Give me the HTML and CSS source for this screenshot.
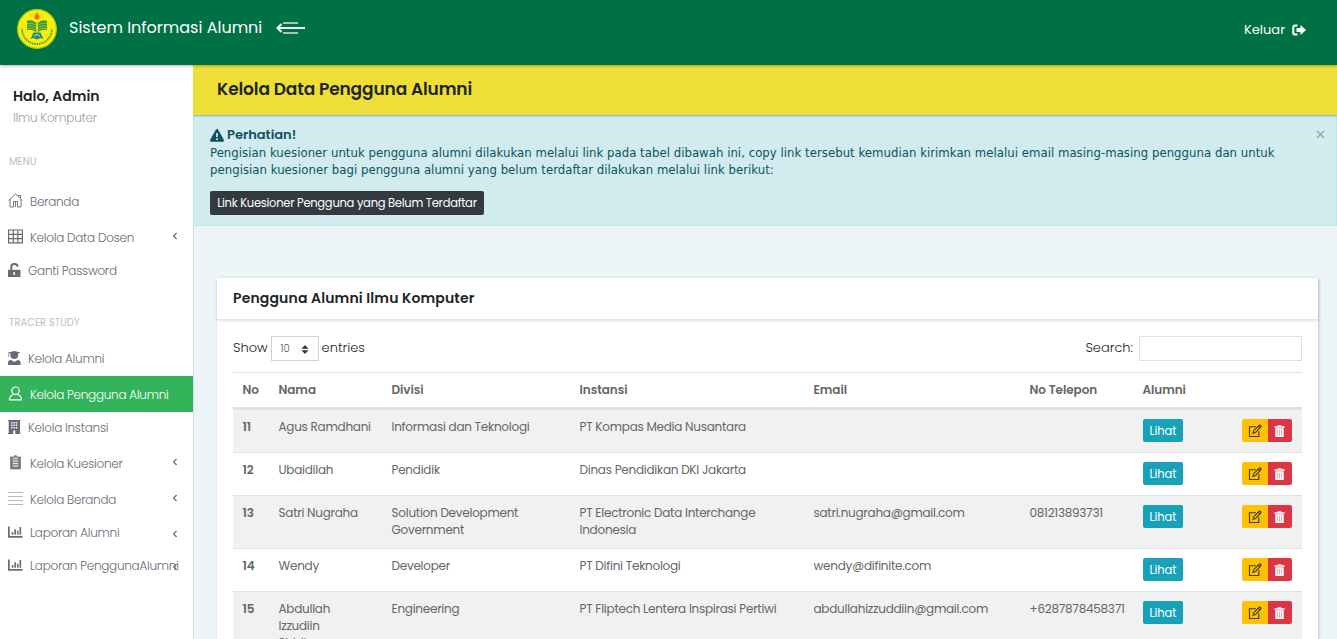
FILE: index.html
```html
<!DOCTYPE html>
<html lang="id">
<head>
<meta charset="utf-8">
<title>Sistem Informasi Alumni</title>
<link rel="stylesheet" href="styles.css">
</head>
<body>
<svg class="sprite" aria-hidden="true">
  <symbol id="caret" viewBox="0 0 6 8"><path d="M4.600 1L1.600 4l3 3" fill="none" stroke="currentColor" stroke-width="1.200"/></symbol>
  <symbol id="chart" viewBox="0 0 16 14"><path d="M0 .5h1.800v10.200h13.700v2H0zM4 6.500h1.700v3H4zM6.800 3.500h1.800v6H6.800zM9.700 5h1.600v4.500H9.700zM12.300 1H14v8.500h-1.700z" fill="currentColor"/></symbol>
  <symbol id="edit" viewBox="0 0 14 14"><path d="M8 2.700H1.500v9.800h9.300V7.200M5 9.300l.7-2.600 5.500-5.400q.7-.5 1.400.2t.2 1.400L7.500 8.500zM10.200 2.200l1.700 1.700" fill="none" stroke="currentColor" stroke-width="1.150"/></symbol>
  <symbol id="trash" viewBox="0 0 12 13"><path d="M.5 1.300H3.700V.3h3.600v1H10.500v1.500H.5z" fill="currentColor"/><path d="M1.300 3.300h8.400V12H1.300z" fill="currentColor"/><path d="M3.500 4.700v5.800M5.500 4.700v5.800M7.500 4.700v5.800" stroke="#e88a94" stroke-width=".8"/></symbol>
</svg>
<header class="topbar">
  <svg class="logo" viewBox="0 0 40 40">
    <circle cx="20" cy="20" r="19.300" fill="#f8ee0b" stroke="#b6ce1c" stroke-width="1.200"/>
    <path d="M5 20a15 15 0 0 0 30 0" fill="none" stroke="#4f9a2b" stroke-width="1.800" stroke-dasharray="1.500 .8"/>
    <path d="M20 3q4 5 2 7.500h-4q-2-2.500 2-7.500z" fill="#ee7f1c"/><path d="M20 6v3.500" stroke="#cf3d1c" stroke-width="1"/>
    <path d="M19 14q-4-4-9-2v9q5-1 9 2zM21 14q4-4 9-2v9q-5-1-9 2z" fill="#38983a"/>
    <path d="M10 14.500q5-1.500 9 1.500M10 17q5-1.500 9 1.500M10 19.500q5-1.500 9 1.500M30 14.500q-5-1.500-9 1.500M30 17q-5-1.500-9 1.500M30 19.500q-5-1.500-9 1.500" fill="none" stroke="#d2df21" stroke-width=".6"/>
    <path d="M16.500 23.500h7l3 6.500-3-1-3.500 1.500-3.500-1.500-3 1z" fill="#25906b"/><path d="M17 27q3-3 6 0" fill="none" stroke="#c4ded0"/>
    <path d="M20 12v11" stroke="#a9cb24"/>
  </svg>
  <span class="brand">Sistem Informasi Alumni</span>
  <svg class="toggle" viewBox="0 0 30 14"><path d="M7 2h15M7 12h15" stroke="#d5e8df" stroke-width="1.500"/><path d="M2 7h27" stroke="#fff" stroke-width="2"/><path d="M5.500 3L1.500 7l4 4" fill="none" stroke="#fff" stroke-width="2"/></svg>
  <a class="logout">Keluar <svg viewBox="0 0 14 12"><path d="M5.500 1.500H3Q1.300 1.500 1.300 3v6q0 1.500 1.700 1.500h2.500" fill="none" stroke="#fff" stroke-width="2"/><path d="M4.500 4h4V1L14 6l-5.500 5V8h-4z" fill="#fff"/></svg></a>
</header>
<div class="shell">
  <nav class="sidebar">
    <div class="hello">Halo, Admin</div>
    <div class="dept">Ilmu Komputer</div>
    <div class="section first">MENU</div>
    <a class="item tall"><svg class="ic" viewBox="0 0 15 15"><path d="M.5 7.500l7-6.500 7 6.500M2 6.300V14h3.500V8.500h4V14H13V6.300M10 2.500h2.500V5M7.500 9v5" fill="none" stroke="currentColor" stroke-width=".9"/></svg><span>Beranda</span></a>
    <a class="item tall"><svg class="ic" viewBox="0 0 15 15"><path d="M.6 1h13.800v12.800H.6zM5.300 1v12.800M9.900 1v12.800M.6 5.300h13.800M.6 9.600h13.800" fill="none" stroke="currentColor" stroke-width="1.200"/></svg><span>Kelola Data Dosen</span><svg class="caret"><use href="#caret"/></svg></a>
    <a class="item fa"><svg class="ic" viewBox="0 0 15 15"><path d="M3.300 7V4.200a3 3 0 0 1 6.200-.4" fill="none" stroke="currentColor" stroke-width="2"/><path d="M0 6.800h12.500V14H0z" fill="currentColor"/><path d="M6.200 9v3" stroke="#fff" stroke-width="1.500"/></svg><span>Ganti Password</span></a>
    <div class="section second">TRACER STUDY</div>
    <a class="item fa"><svg class="ic" viewBox="0 0 15 15"><path d="M0 1.500L6.300 0l6.300 1.500-2.500.9V5q-.5 3-3.800 3T2.500 5V2.400L1.200 2v4H.5V2zM0 14v-2q0-3 3-3l3.300 2 3.300-2q3 0 3 3v2z" fill="currentColor"/></svg><span>Kelola Alumni</span></a>
    <a class="item tall active"><svg class="ic" viewBox="0 0 15 15"><circle cx="7.500" cy="4.700" r="3.700" fill="none" stroke="currentColor" stroke-width="1.200"/><path d="M5.300 8.500Q1.500 10 1.500 13.800h12Q13.500 10 9.700 8.500" fill="none" stroke="currentColor" stroke-width="1.200"/></svg><span>Kelola Pengguna Alumni</span></a>
    <a class="item fa"><svg class="ic" viewBox="0 0 15 15"><path d="M0 0h12.500v1H12v12h.5v1H0v-1h.7V1H0z" fill="currentColor"/><path d="M3.200 2.800h6M3.200 5.300h6M3.200 7.800h6" stroke="#fff" stroke-width="1.400" stroke-dasharray="1.400 .9"/><path d="M5.300 10.500h2V14h-2z" fill="#fff"/></svg><span>Kelola Instansi</span></a>
    <a class="item tall"><svg class="ic" viewBox="0 0 15 15"><path d="M2.500 1.500h3Q6 0 7.500 0t2 1.500h3V14h-10z" fill="#8b8c96"/><path d="M3 2v11.500h9V2" fill="none" stroke="currentColor" stroke-width="1.300"/><path d="M5.300 3.500h4.500M5 6h5M5 8.500h5M5 11h5" stroke="#fff" stroke-width=".8"/></svg><span>Kelola Kuesioner</span><svg class="caret"><use href="#caret"/></svg></a>
    <a class="item tall"><svg class="ic" viewBox="0 0 15 15"><path d="M0 1.500h15M0 5.500h15M0 9.500h15M0 13.500h15" stroke="#babbc1" stroke-width="1"/></svg><span>Kelola Beranda</span><svg class="caret"><use href="#caret"/></svg></a>
    <a class="item"><svg class="ic"><use href="#chart"/></svg><span>Laporan Alumni</span><svg class="caret"><use href="#caret"/></svg></a>
    <a class="item"><svg class="ic"><use href="#chart"/></svg><span>Laporan PenggunaAlumni</span><svg class="caret"><use href="#caret"/></svg></a>
  </nav>
  <main class="content">
    <h1 class="title">Kelola Data Pengguna Alumni</h1>
    <section class="alert">
      <div class="alert-head"><svg viewBox="0 0 14 13"><path d="M7 0q.8 0 1.200.8l5.600 10q.5 2-1 2H1.200q-1.500 0-1-2l5.600-10Q6.200 0 7 0z" fill="currentColor"/><path d="M7 4v4M7 9.300v1.700" stroke="#d1ebef" stroke-width="1.700"/></svg><b>Perhatian!</b>
      <svg class="close" viewBox="0 0 9 9"><path d="M1 1l7 7M8 1L1 8" stroke="currentColor" stroke-width="1.100"/></svg></div>
      <p class="notice">Pengisian kuesioner untuk pengguna alumni dilakukan melalui link pada tabel dibawah ini, copy link tersebut kemudian kirimkan melalui email masing-masing pengguna dan untuk<br>pengisian kuesioner bagi pengguna alumni yang belum terdaftar dilakukan melalui link berikut:</p>
      <a class="dark-btn">Link Kuesioner Pengguna yang Belum Terdaftar</a>
    </section>
    <section class="card">
      <h2 class="card-title">Pengguna Alumni Ilmu Komputer</h2>
      <div class="card-body">
        <div class="controls">
          <span class="lbl">Show</span>
          <span class="select">10<svg viewBox="0 0 8 9"><path d="M4 0l3.600 3.800H.4zM4 9l3.600-3.800H.4z" fill="#343a40"/></svg></span>
          <span class="lbl">entries</span>
          <label class="search"><span class="lbl">Search:</span><input type="text"></label>
        </div>
        <table class="grid">
          <colgroup><col class="c1"><col class="c2"><col class="c3"><col class="c4"><col class="c5"><col class="c6"><col class="c7"><col class="c8"></colgroup>
          <thead><tr><th>No</th><th>Nama</th><th>Divisi</th><th>Instansi</th><th>Email</th><th>No Telepon</th><th>Alumni</th><th></th></tr></thead>
          <tbody>
            <tr><th>11</th><td>Agus Ramdhani</td><td>Informasi dan Teknologi</td><td>PT Kompas Media Nusantara</td><td></td><td></td><td><a class="see">Lihat</a></td><td><span class="acts"><a class="ed"><svg><use href="#edit"/></svg></a><a class="del"><svg><use href="#trash"/></svg></a></span></td></tr>
            <tr><th>12</th><td>Ubaidilah</td><td>Pendidik</td><td>Dinas Pendidikan DKI Jakarta</td><td></td><td></td><td><a class="see">Lihat</a></td><td><span class="acts"><a class="ed"><svg><use href="#edit"/></svg></a><a class="del"><svg><use href="#trash"/></svg></a></span></td></tr>
            <tr><th>13</th><td>Satri Nugraha</td><td>Solution Development<br>Government</td><td>PT Electronic Data Interchange<br>Indonesia</td><td>satri.nugraha@gmail.com</td><td>081213893731</td><td><a class="see">Lihat</a></td><td><span class="acts"><a class="ed"><svg><use href="#edit"/></svg></a><a class="del"><svg><use href="#trash"/></svg></a></span></td></tr>
            <tr><th>14</th><td>Wendy</td><td>Developer</td><td>PT Difini Teknologi</td><td>wendy@difinite.com</td><td></td><td><a class="see">Lihat</a></td><td><span class="acts"><a class="ed"><svg><use href="#edit"/></svg></a><a class="del"><svg><use href="#trash"/></svg></a></span></td></tr>
            <tr><th>15</th><td>Abdullah<br>Izzudiin<br>Shidiq</td><td>Engineering</td><td>PT Fliptech Lentera Inspirasi Pertiwi</td><td>abdullahizzuddiin@gmail.com</td><td>+6287878458371</td><td><a class="see">Lihat</a></td><td><span class="acts"><a class="ed"><svg><use href="#edit"/></svg></a><a class="del"><svg><use href="#trash"/></svg></a></span></td></tr>
          </tbody>
        </table>
      </div>
    </section>
  </main>
</div>
</body>
</html>
```
FILE: styles.css
```css
* { box-sizing: border-box; }
html, body { margin: 0; height: 639px; overflow: hidden; }
body { font: 300 13px/20px Poppins, Inter, sans-serif; color: #212529; background: #ecf4f7; white-space: nowrap; }
.sprite { display: none; }
h1, h2, p { margin: 0; }

.topbar { height: 65px; background: #007046; color: #fff; display: flex; align-items: flex-start; padding: 9px 31px 0 17px; position: relative; box-shadow: 0 1px 3px rgba(0,0,0,.3); z-index: 1; }
.logo { width: 40px; height: 40px; }
.brand { font-size: 16px; font-weight: 400; line-height: 24px; margin: 7px 0 0 12px; width: 192px; }
.toggle { width: 30px; height: 14px; margin: 12px 0 0 15px; }
.logout { margin: 11px 0 0 auto; font-weight: 400; display: flex; align-items: center; gap: 7px; }
.logout svg { width: 14px; height: 12px; margin-top: -1px; }

.shell { display: flex; height: 574px; }
.sidebar { width: 193px; flex: none; background: #fff; box-shadow: 1px 0 0 #d5e0e4; }
.hello { font-size: 14px; font-weight: 600; padding: 21px 0 0 13px; }
.dept { font-size: 12px; letter-spacing: -.26px; color: #a0a0a0; margin: 2px 0 0 13px; }
.section { font-size: 10px; font-weight: 400; color: #c0c0c0; padding-left: 9px; line-height: 20px; }
.first { margin: 24px 0 11px; }
.second { margin: 25px 0 10px; }
.item { display: flex; align-items: center; height: 33px; padding: 0 13px 2px 8px; color: #686a76; font-size: 12px; letter-spacing: -.26px; position: relative; }
.item.tall { height: 36px; padding: 1px 13px 0 8px; }
.ic { width: 15px; height: 15px; margin-right: 7px; flex: none; }
.tall .ic { margin-top: -2px; }
.fa .ic { margin-right: 5px; }
.caret { width: 6px; height: 8px; position: absolute; right: 15px; top: 13px; }
.active { background: #34b45a; color: #fff; }

.content { flex: 1; min-width: 0; overflow: hidden; }
.title { height: 50px; background: #eddf37; padding: 12px 24px; font-size: 17px; line-height: 24px; font-weight: 600; letter-spacing: -.13px; box-shadow: 0 1px 2px rgba(0,0,0,.25); position: relative; }
.alert { height: 111px; background: #d1ebef; color: #0c5460; border: 1px solid #bee5eb; padding: 10px 11px 0 16px; }
.alert-head { display: flex; align-items: center; height: 18px; gap: 3px; font-size: 13px; }
.alert-head b { font-weight: 600; }
.alert-head svg { width: 14px; height: 13px; }
.alert-head .close { width: 9px; height: 9px; margin: -2px 0 0 auto; color: #7ca9b1; }
.notice { font: 400 13px/17px "DejaVu Sans Condensed", "DejaVu Sans", sans-serif; font-stretch: condensed; letter-spacing: .04px; }
.dark-btn { display: inline-block; height: 24px; line-height: 24px; width: 274px; text-align: center; margin-top: 13px; border-radius: 2px; background: #343a40; color: #fff; font-weight: 400; font-size: 11.5px; letter-spacing: -.26px; }

.card { margin: 52px 19px 0 24px; height: 500px; background: #fff; box-shadow: 1px 1px 3px rgba(0,0,0,.2); }
.card-title { height: 42px; padding: 0 16px; font-size: 14px; line-height: 41px; font-weight: 600; letter-spacing: .14px; border-bottom: 1px solid #e5e5e5; box-shadow: 0 1px 3px rgba(0,0,0,.12); }
.card-body { padding: 16px 16px 0; }
.controls { display: flex; align-items: center; height: 25px; gap: 3px; font-size: 13px; margin-bottom: 11px; }
.lbl { padding-bottom: 2px; }
.select { width: 48px; height: 25px; border: 1px solid #ced4da; display: flex; justify-content: space-between; align-items: center; padding: 0 9px; font-size: 10px; color: #495057; }
.select svg { width: 8px; height: 9px; margin-top: 2px; }
.search { margin-left: auto; display: flex; align-items: center; gap: 6px; }
.search input { width: 163px; height: 25px; border: 1px solid #dcdfe3; background: #fff; padding: 0 8px; }
.grid { width: 1069px; table-layout: fixed; border-collapse: separate; border-spacing: 0; font-size: 12px; line-height: 17px; letter-spacing: -.26px; color: #666; font-weight: 400; }
.c1 { width: 36px; } .c2 { width: 113px; } .c3 { width: 188px; } .c4 { width: 234px; }
.c5 { width: 216px; } .c6 { width: 113px; } .c7 { width: 100px; } .c8 { width: 69px; }
.grid th, .grid td { border-top: 1px solid #dee2e6; padding: 8px 9px 10px 9.500px; text-align: left; vertical-align: top; }
.grid td:nth-child(n+7) { padding: 9px; }
.grid th { font-weight: 600; letter-spacing: -.05px; }
.grid thead th { height: 37px; padding: 8px 9px 7px 9.500px; border-bottom: 2px solid #dee2e6; }
.grid tbody tr { height: 43px; }
.grid tbody tr:nth-child(odd) { background: #f1f1f1; }
.see { display: block; width: 40px; height: 23px; margin-left: 1px; line-height: 24px; text-align: center; background: #18a2b8; color: #fff; border-radius: 2px; font-size: 11.5px; letter-spacing: 0; }
.acts { display: flex; width: 50px; height: 23px; border-radius: 2px; overflow: hidden; }
.ed, .del { display: flex; align-items: center; justify-content: center; }
.ed { width: 26px; background: #ffc107; color: #473d17; }
.del { width: 24px; background: #dc3545; color: #fff; }
.ed svg { width: 14px; height: 14px; }
.del svg { width: 12px; height: 13px; margin-top: 1px; }
```
